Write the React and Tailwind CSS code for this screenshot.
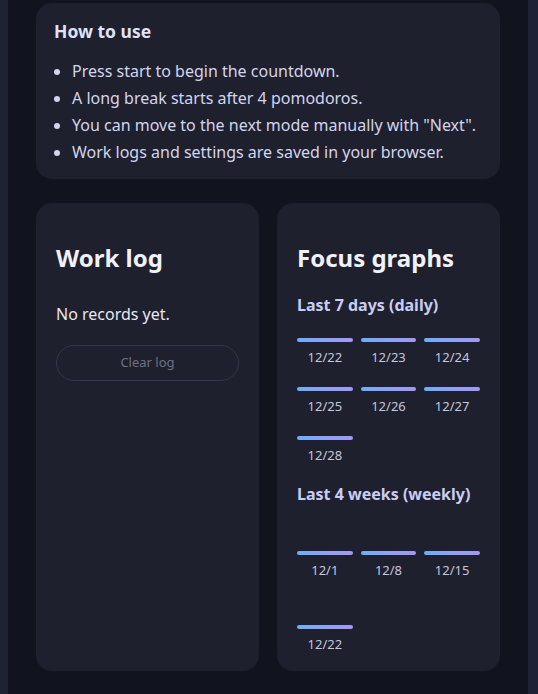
import React from "react";

const daily = ["12/22", "12/23", "12/24", "12/25", "12/26", "12/27", "12/28"];
const weekly = ["12/1", "12/8", "12/15", "12/22"];

function Bars({ items, area, gapY }) {
  return (
    <div className={`grid grid-cols-3 gap-x-2 ${gapY} mt-2`}>
      {items.map((d) => (
        <div key={d} className="flex flex-col">
          <div className={`${area} flex items-end`}>
            <div className="h-1 w-full rounded-full bg-gradient-to-r from-[#6aaefb] to-[#a596f6]" />
          </div>
          <div className="mt-[6px] text-center text-[13px] leading-[18px] text-[#c3c6dc]">{d}</div>
        </div>
      ))}
    </div>
  );
}

export default function App() {
  return (
    <div
      className="min-h-screen bg-[#1e2234] pl-2 pr-[10px]"
      style={{ fontFamily: '"Noto Sans", "Open Sans", sans-serif' }}
    >
      <div className="min-h-[694px] bg-[#11131f] px-[28px] pt-[3px] pb-[23px]">
        <div className="rounded-2xl bg-[#1f202d] px-[18px] pt-[15px] pb-[13px]">
          <h3 className="text-[17.5px] font-bold leading-[27px] text-[#dfe2f8]">How to use</h3>
          <ul className="mt-[13px] list-disc pl-[18px] text-[16px] leading-[27px] text-[#d2d5ee]">
            <li>Press start to begin the countdown.</li>
            <li>A long break starts after 4 pomodoros.</li>
            <li>You can move to the next mode manually with "Next".</li>
            <li>Work logs and settings are saved in your browser.</li>
          </ul>
        </div>

        <div className="mt-[24px] grid grid-cols-2 gap-[18px]">
          <div className="rounded-2xl bg-[#1f202d] px-5 pt-10">
            <h2 className="text-[24px] font-bold leading-[30px] text-[#f1f1fa]">Work log</h2>
            <p className="mt-[29px] text-[16px] leading-[24px] text-[#e6e7f2]">No records yet.</p>
            <button className="mt-[19px] h-9 w-full rounded-full border border-[#353749] text-[13px] text-[#6e7186]">
              Clear log
            </button>
          </div>

          <div className="rounded-2xl bg-[#1f202d] px-5 pt-10 pb-[18px]">
            <h2 className="text-[24px] font-bold leading-[30px] text-[#f1f1fa]">Focus graphs</h2>
            <h4 className="mt-[20px] text-[16px] font-bold leading-[24px] text-[#c9cdf6]">Last 7 days (daily)</h4>
            <Bars items={daily} area="h-[17px]" gapY="gap-y-2" />
            <h4 className="mt-[18px] text-[16px] font-bold leading-[24px] text-[#c9cdf6]">Last 4 weeks (weekly)</h4>
            <Bars items={weekly} area="h-[41px]" gapY="gap-y-[9px]" />
          </div>
        </div>
      </div>
    </div>
  );
}
